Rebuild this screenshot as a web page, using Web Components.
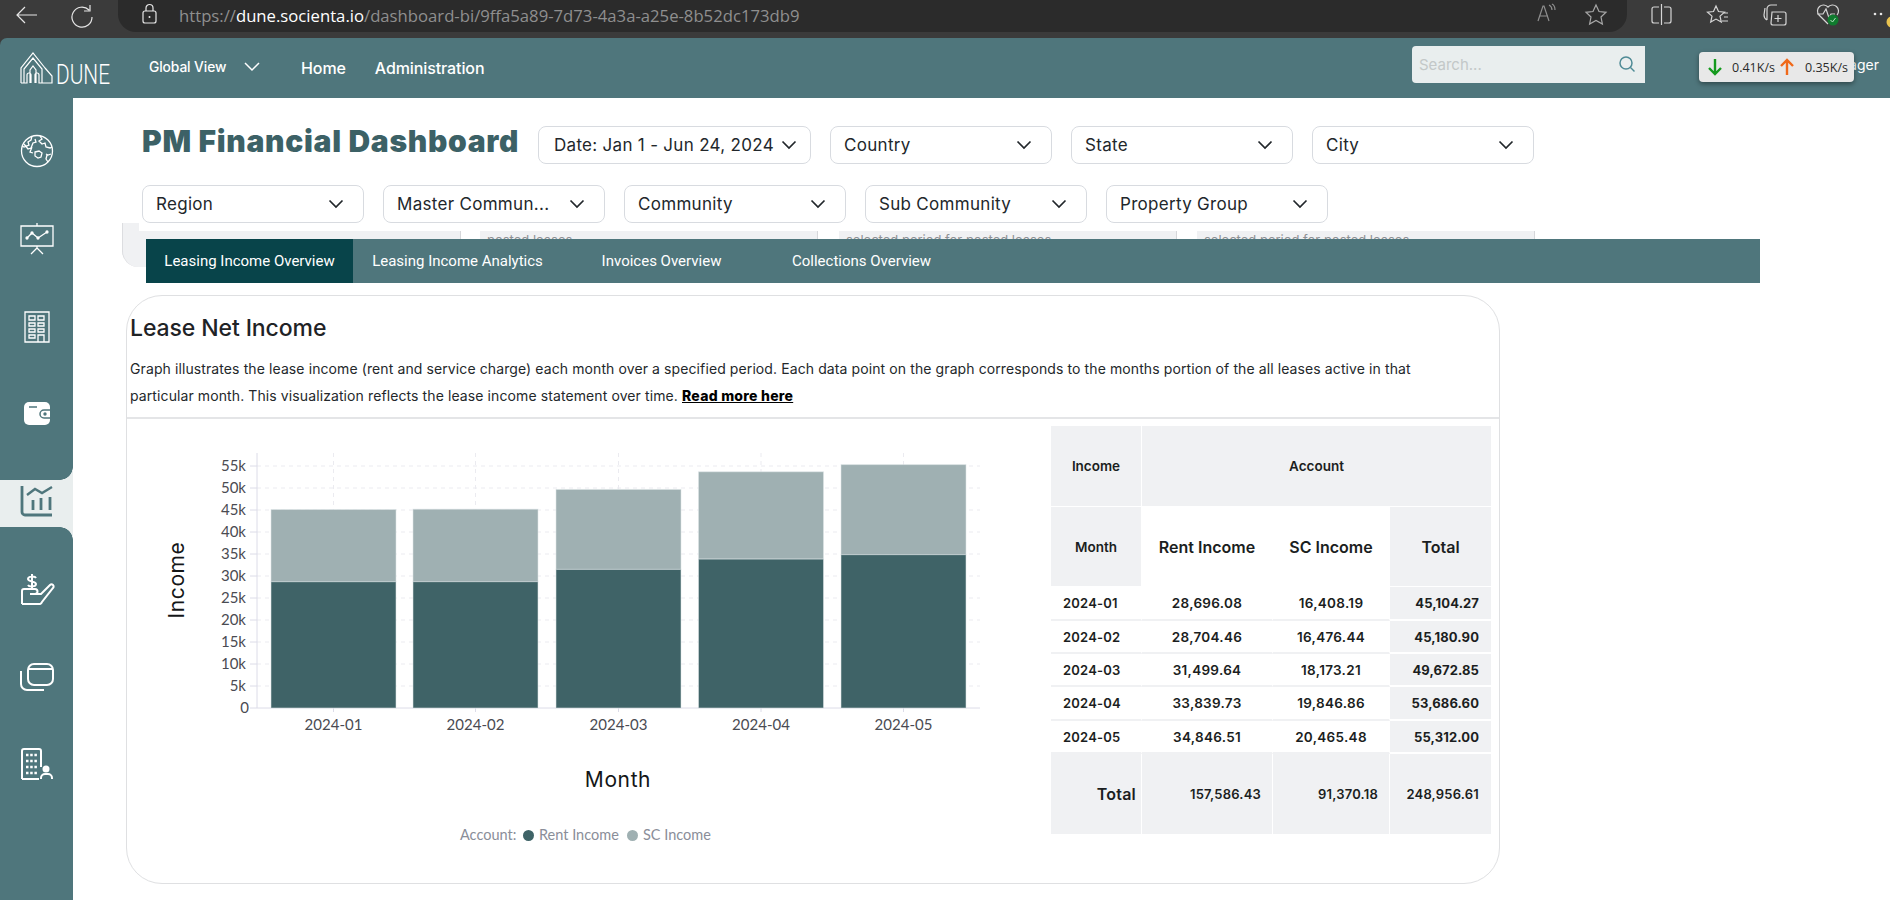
<!DOCTYPE html>
<html lang="en">
<head>
<meta charset="utf-8">
<title>PM Financial Dashboard</title>
<style>
  html, body { margin: 0; height: 100%; overflow: hidden; background: #3b3b3b; }
  body { font-family: Inter, "Noto Sans", sans-serif; color: #1f2326; }
  app-shell { height: 900px; }
</style>
</head>
<body>
<app-shell>
  <browser-bar slot="browser"></browser-bar>
  <app-header slot="header"></app-header>
  <side-nav slot="nav"></side-nav>
  <filter-bar></filter-bar>
  <hidden-cards></hidden-cards>
  <tab-bar></tab-bar>
  <lease-card>
    <income-chart slot="chart"></income-chart>
    <income-table slot="table"></income-table>
  </lease-card>
</app-shell>

<script>
const TEAL = '#4f767c';

class AppShell extends HTMLElement {
  constructor() {
    super();
    this.attachShadow({ mode: 'open' }).innerHTML = `
      <style>
        :host { display: flex; flex-direction: column; width: 1890px; height: 900px; overflow: hidden; }
        .frame { flex: 1; display: flex; flex-direction: column; background: ${TEAL}; border-top-left-radius: 7px; overflow: hidden; }
        .body { flex: 1; display: flex; min-height: 0; }
        main { flex: 1; background: #fff; min-width: 0; }
      </style>
      <slot name="browser"></slot>
      <div class="frame">
        <slot name="header"></slot>
        <div class="body">
          <slot name="nav"></slot>
          <main><slot></slot></main>
        </div>
      </div>`;
  }
}

class BrowserBar extends HTMLElement {
  constructor() {
    super();
    this.attachShadow({ mode: 'open' }).innerHTML = `
      <style>
        :host { display: flex; height: 38px; background: #3b3b3b; position: relative; }
        svg { position: absolute; left: 0; top: 0; fill: none; stroke: #d6d6d6; stroke-width: 1.2; }
        .pill { position: absolute; left: 118px; top: 0; width: 1509px; height: 32px; background: #2b2b2b; border-radius: 0 0 18px 18px; display: flex; align-items: center; padding: 0 0 2px 61px; box-sizing: border-box;
          font: 400 16.7px "Open Sans", sans-serif; color: #8f8f8f; white-space: nowrap; }
        b { font-weight: 400; color: #fff; }
      </style>
      <div class="pill"><span>https://<b>dune.socienta.io</b>/dashboard-bi/9ffa5a89-7d73-4a3a-a25e-8b52dc173db9</span></div>
      <svg width="1890" height="38" viewBox="0 0 1890 38">
        <path d="M37 15H17M25 7l-8 8 8 8" stroke="#e6e6e6"/>
        <path d="M89 10a10 10 0 1 0 3 7M90 5v6h-6" stroke="#e6e6e6"/>
        <rect x="143" y="11" width="13" height="12" rx="2" stroke="#e6e6e6"/><path d="M146 11V8a3.500 3.500 0 0 1 7 0v3" stroke="#e6e6e6"/><circle cx="149.500" cy="17" r="1" fill="#e6e6e6" stroke="none"/>
        <path d="M1538 21l5-15h1l5 15M1540 16h8M1549 5c2 1 3 3 3 5M1552 4c2 1 3 3 3 6" stroke="#8f8f8f"/>
        <path d="M1596 5l3 6.500 7 .8-5 4.700 1.400 7-6.400-3.500-6.400 3.500 1.400-7-5-4.700 7-.8z" stroke="#a8a8a8"/>
        <path d="M1659 7h-5a2 2 0 0 0-2 2v12a2 2 0 0 0 2 2h5M1664 7h5a2 2 0 0 1 2 2v12a2 2 0 0 1-2 2h-5M1661.500 4v21"/>
        <path d="M1716 6l2.500 5.500 6 .6-4.500 4 1.300 6-5.300-3-5.300 3 1.300-6-4.500-4 6-.6zM1723 13h5M1724 17h4M1722 21h6"/>
        <path d="M1767 20V9a4 4 0 0 1 4-4h6M1767 20c-2-1-3-3-3-5l1-7M1772 12h12a2 2 0 0 1 2 2v9a2 2 0 0 1-2 2h-11a2 2 0 0 1-2-2z M1778 15v7M1774.500 18.500h7"/>
        <path d="M1828 24l-9-9a6 6 0 0 1 9-8 6 6 0 0 1 9 8M1817 14h6l3-5 3 9 2-4h4"/>
        <circle cx="1833" cy="20" r="5.500" fill="#0f7b2e" stroke="none"/>
        <path d="M1830.500 20l2 2 3-4" stroke="#b9e0c4" stroke-width="1"/>
        <circle cx="1875" cy="14" r="1.300" fill="#e6e6e6" stroke="none"/><circle cx="1881" cy="14" r="1.300" fill="#e6e6e6" stroke="none"/>
        <circle cx="1892" cy="22" r="5.500" fill="#e9c34f" stroke="none"/>
      </svg>`;
  }
}

class AppHeader extends HTMLElement {
  constructor() {
    super();
    this.attachShadow({ mode: 'open' }).innerHTML = `
      <style>
        :host { display: flex; height: 60px; align-items: center; color: #fff; position: relative; flex: none; font-family: Inter, sans-serif; }
        .logo { margin-left: 20px; width: 112px; height: 46px; flex: none; }
        .logo path { fill: none; stroke: #fff; stroke-width: 1.200; }
        .logo text { font: 300 27px Roboto, sans-serif; fill: #fff; }
        .view { margin-left: 17px; font-size: 13.800px; display: flex; align-items: center; gap: 18px; width: 148px; flex: none; margin-top: -3px; font-weight: 500; letter-spacing: -.1px; white-space: nowrap; }
        .view svg { fill: none; stroke: #fff; stroke-width: 1.500; }
        a { font-size: 16px; font-weight: 500; margin-right: 29px; letter-spacing: -.1px; }
        a:first-of-type { margin-left: 4px; }
        .search { margin-left: auto; width: 233px; height: 37px; background: #e9eeee; border-radius: 4px 0 0 4px; display: flex; align-items: center; justify-content: space-between; padding: 0 9px 1px 7px; box-sizing: border-box; font-size: 15px; color: #c3c8c8; margin-top: -7px; }
        .search svg { fill: none; stroke: #4f8b96; stroke-width: 1.500; }
        .user { width: 36px; margin-left: 198px; margin-right: 11px; text-align: right; font-size: 14px; margin-top: -8px; flex: none; }
        .speed { position: absolute; left: 1699px; top: 14px; width: 155px; height: 30px; background: #e8e8e8; border-radius: 4px; box-shadow: 0 2px 5px rgba(0,0,0,.4); display: flex; align-items: center; color: #2b2b2b; font: 400 12.500px "Open Sans", sans-serif; box-sizing: border-box; padding-left: 8px; }
        .speed svg { fill: none; stroke-width: 2.400; flex: none; }
      </style>
      <svg class="logo" viewBox="20 45 112 46">
        <path d="M21 83V68l12-15 12 15M24 83V69l9-11 9 11v14M21 83h6v-8a2 2 0 0 1 4 0v8M35 83v-8a2 2 0 0 1 4 0v8h6M30 83V70l3-4 3 4v13M45 68l7 8v7h-7"/>
        <text x="56" y="83.500" textLength="54" lengthAdjust="spacingAndGlyphs">DUNE</text>
      </svg>
      <div class="view"><span>Global View</span><svg width="16" height="10" viewBox="0 0 16 10"><path d="M1 1l7 7 7-7"/></svg></div>
      <a>Home</a><a>Administration</a>
      <div class="search"><span>Search...</span><svg width="18" height="18" viewBox="0 0 18 18"><circle cx="8" cy="8" r="6"/><path d="M12.500 12.500l4 4"/></svg></div>
      <div class="user">ager</div>
      <div class="speed">
        <svg width="16" height="20" viewBox="0 0 16 20" stroke="#159a1e"><path d="M8 2v15M2 11l6 6 6-6"/></svg>
        <span style="margin-left:9px;width:47px">0.41K/s</span>
        <svg width="16" height="20" viewBox="0 0 16 20" stroke="#f0691a"><path d="M8 18V3M2 9l6-6 6 6"/></svg>
        <span style="margin-left:10px">0.35K/s</span>
      </div>`;
  }
}

const NAV_ICONS = {
  globe: `<circle cx="18" cy="18" r="15.500"/><path d="M21 3l2 3-3 2 3 3 3-1 1 4 4 1 2-1M13 3l-1 4-3 2 1 3-5 2-2-1M5 11l4 5 3-1 2-5 3-1-1-3M13 14l-2 5 3 1M16 19l4-1 3 2-1 4-3 1-3-2zM27 21l2 1 3-1M28 22l-1 4 2 3"/>`,
  board: `<path d="M2 6h32v20H2zM18 6V3M18 26v2M18 28l-6 6M18 28l6 6M8 18l5-5 6 5 9-6"/><circle cx="8" cy="18" r="1" fill="#fff"/><circle cx="13" cy="13" r="1" fill="#fff"/><circle cx="19" cy="18" r="1" fill="#fff"/><circle cx="28" cy="12" r="1" fill="#fff"/>`,
  building: `<path d="M6 3h24v30H6zM10 7h6v4h-6zM19 7h6v4h-6zM10 14h6v3h-6zM19 14h6v3h-6zM10 20h6v3h-6zM19 20h6v3h-6zM10 26h6v3h-6zM19 26h6v7h-6z"/>`,
  wallet: `<path d="M10 7h16a5 5 0 0 1 5 5v13a5 5 0 0 1-5 5H10a5 5 0 0 1-5-5V12a5 5 0 0 1 5-5z" fill="#fff" stroke="none"/><path d="M31 15h-6a4 4 0 0 0 0 8h6" stroke="${TEAL}" stroke-width="1.500"/><path d="M10 12h8" stroke="${TEAL}" stroke-width="1.500"/><circle cx="26" cy="19" r="1.700" fill="${TEAL}" stroke="none"/>`,
  chart: `<path d="M3 1v26a3 3 0 0 0 3 3h27" stroke="${TEAL}" stroke-width="2.800"/><path d="M14 25V15M22 25V13M31 25V12" stroke="${TEAL}" stroke-width="2.800"/><path d="M8 10l8-6 7 4 10-6" stroke="${TEAL}" stroke-width="2.400"/>`,
  hand: `<path d="M17 7c-1-2-8-2-8 1s8 2 8 5-7 3-8 1M13 3v15" stroke-width="2"/><path d="M3 33V20a2 2 0 0 1 2-2h11a2.500 2.500 0 0 1 0 5h-5M16 23h6l9-9a2 2 0 0 1 3 3L23 31a3 3 0 0 1-2 2H3" stroke-width="2"/>`,
  cards: `<rect x="9" y="4" width="25" height="21" rx="6" stroke-width="2"/><path d="M9 9h25" stroke-width="2"/><path d="M2 11v13a6 6 0 0 0 6 6h17" stroke-width="2"/>`,
  tenant: `<path d="M3 33V5a2 2 0 0 1 2-2h15a2 2 0 0 1 2 2v16M3 33h17" stroke-width="2"/><path d="M7 9h11M7 15h11M7 21h11M7 27h11" stroke-width="2.400" stroke-dasharray="2.500 1.700"/><circle cx="27" cy="23" r="3.500" fill="#fff" stroke="none"/><path d="M22 33v-1a4 4 0 0 1 4-4h3a4 4 0 0 1 4 4v1" stroke-width="2"/>`
};

class SideNav extends HTMLElement {
  constructor() {
    super();
    const items = [
      ['globe', 29.5], ['board', 40], ['building', 42], ['wallet', 39],
      ['chart', 43, true], ['hand', 38.5], ['cards', 42], ['tenant', 39]
    ];
    this.attachShadow({ mode: 'open' }).innerHTML = `
      <style>
        :host { display: block; width: 73px; flex: none; background: ${TEAL}; }
        div { height: 47px; display: flex; align-items: center; justify-content: center; position: relative; }
        svg { fill: none; stroke: #fff; stroke-width: 1.300; }
        .on { background: #e9eeee; }
        .on::before, .on::after { content: ""; position: absolute; right: 0; width: 13px; height: 13px; }
        .on::before { top: -13px; background: radial-gradient(circle at 0 0, ${TEAL} 12.500px, #e9eeee 13px); }
        .on::after { bottom: -13px; background: radial-gradient(circle at 0 100%, ${TEAL} 12.500px, #e9eeee 13px); }
      </style>
      ${items.map(([name, top, on]) => `<div class="${on ? 'on' : ''}" style="margin-top:${top}px"><svg width="36" height="36" viewBox="0 0 36 36">${NAV_ICONS[name]}</svg></div>`).join('')}`;
  }
}

class FilterSelect extends HTMLElement {
  constructor() {
    super();
    this.attachShadow({ mode: 'open' }).innerHTML = `
      <style>
        :host { display: flex; align-items: center; justify-content: space-between; width: var(--w, 222px); height: 38px; box-sizing: border-box; border: 1px solid #d8dbe0; border-radius: 8px; padding: 0 var(--pr, 19px) 1px var(--pl, 13px); font: 400 17px Inter, sans-serif; letter-spacing: .3px; color: #22272b; white-space: nowrap; flex: none; }
        svg { fill: none; stroke: #22272b; stroke-width: 1.700; flex: none; }
      </style>
      <span><slot></slot></span>
      <svg width="16" height="10" viewBox="0 0 16 10"><path d="M1.500 1.500L8 8l6.500-6.500"/></svg>`;
  }
}

class FilterBar extends HTMLElement {
  constructor() {
    super();
    this.attachShadow({ mode: 'open' }).innerHTML = `
      <style>
        :host { display: flex; flex-direction: column; gap: 21px; padding: 28px 0 0 69px; }
        .row { display: flex; gap: 19px; align-items: center; }
        h1 { margin: -9px 0 0; width: 377px; font: 900 30px Inter, sans-serif; color: #3c6166; white-space: nowrap; letter-spacing: .7px; }
        .date { --w: 273px; --pl: 15px; --pr: 13px; }
      </style>
      <div class="row">
        <h1>PM Financial Dashboard</h1>
        <filter-select class="date">Date: Jan 1 - Jun 24, 2024</filter-select>
        <filter-select>Country</filter-select>
        <filter-select>State</filter-select>
        <filter-select>City</filter-select>
      </div>
      <div class="row">
        <filter-select>Region</filter-select>
        <filter-select>Master Commun...</filter-select>
        <filter-select>Community</filter-select>
        <filter-select>Sub Community</filter-select>
        <filter-select>Property Group</filter-select>
      </div>`;
  }
}

class HiddenCards extends HTMLElement {
  constructor() {
    super();
    const cards = [[322, 0, ''], [338, 19, 'posted leases'], [338, 21, 'selected period for posted leases'], [338, 20, 'selected period for posted leases']];
    this.attachShadow({ mode: 'open' }).innerHTML = `
      <style>
        :host { display: block; margin-left: 49px; width: 1413px; height: 44px; background: #f0f1f3; border-radius: 0 0 0 16px; border-left: 1px solid #dcdde0; box-sizing: border-box; overflow: hidden; }
        .inner { margin-left: 16px; height: 16px; background: #fff; display: flex; overflow: hidden; }
        .c { margin-top: 8px; height: 40px; background: #f0f1f3; border-right: 1px solid #d6d7da; box-sizing: border-box; flex: none; font: 400 13px/16px Inter, sans-serif; color: #8d9094; padding: 1px 0 0 7px; white-space: nowrap; }
      </style>
      <div class="inner">${cards.map(([w, m, t]) => `<div class="c" style="width:${w}px;margin-left:${m}px">${t}</div>`).join('')}</div>`;
  }
}

class TabBar extends HTMLElement {
  constructor() {
    super();
    this.attachShadow({ mode: 'open' }).innerHTML = `
      <style>
        :host { display: flex; position: relative; margin: -28px 0 0 73px; width: 1614px; height: 44px; background: ${TEAL}; color: #fff; font: 400 15px Roboto, sans-serif; }
        div { display: flex; align-items: center; justify-content: center; white-space: nowrap; flex: none; }
        .on { background: #08444a; width: 207px; }
        .second { margin-left: 19px; width: 171px; }
        .third { margin-left: 59px; width: 119px; }
        .fourth { margin-left: 71px; width: 139px; }
      </style>
      <div class="on">Leasing Income Overview</div>
      <div class="second">Leasing Income Analytics</div>
      <div class="third">Invoices Overview</div>
      <div class="fourth">Collections Overview</div>`;
  }
}

class LeaseCard extends HTMLElement {
  constructor() {
    super();
    this.attachShadow({ mode: 'open' }).innerHTML = `
      <style>
        :host { display: flex; flex-direction: column; margin: 12px 0 0 53px; width: 1374px; height: 589px; box-sizing: border-box; border: 1.500px solid #dfe0e2; border-radius: 36px; overflow: hidden; font-family: Inter, sans-serif; background: #fff; }
        header { height: 123px; box-sizing: border-box; padding: 17px 0 0 3px; border-bottom: 2px solid #e4e5e7; flex: none; }
        h2 { margin: 0; font: 500 23px/30px Inter, sans-serif; color: #1f2326; letter-spacing: -.1px; }
        p { margin: 12px 0 0; font-size: 14px; line-height: 27px; color: #24282b; letter-spacing: .1px; white-space: nowrap; }
        a { font-weight: 800; color: #000; text-decoration: underline; letter-spacing: .25px; }
        .body { flex: 1; display: flex; min-height: 0; }
      </style>
      <header>
        <h2>Lease Net Income</h2>
        <p>Graph illustrates the lease income (rent and service charge) each month over a specified period. Each data point on the graph corresponds to the months portion of the all leases active in that<br>particular month. This visualization reflects the lease income statement over time. <a>Read more here</a></p>
      </header>
      <div class="body"><slot name="chart"></slot><slot name="table"></slot></div>`;
  }
}

class IncomeChart extends HTMLElement {
  constructor() {
    super();
    const rows = [
      ['2024-01', 28696.08, 16408.19, 333.5], ['2024-02', 28704.46, 16476.44, 475.5], ['2024-03', 31499.64, 18173.21, 618.5],
      ['2024-04', 33839.73, 19846.86, 761], ['2024-05', 34846.51, 20465.48, 903.5]
    ];
    const y = v => 708 - v * 0.0044;
    let ticks = '';
    for (let k = 0; k <= 55; k += 5) {
      const ty = y(k * 1000);
      if (k) ticks += `<path class="grid" d="M257 ${ty}H980"/>`;
      ticks += `<path class="axis" d="M250 ${ty}h7"/><text class="tick" x="${k ? 246 : 249}" y="${ty + 5}" text-anchor="end">${k ? k + 'k' : 0}</text>`;
    }
    const bars = rows.map(([m, rent, sc, cx]) => `
      <path class="grid" d="M${cx} 453V708"/>
      <rect class="bar" x="${cx - 62.5}" y="${y(rent + sc)}" width="125" height="${sc * 0.0044}" fill="#9fb0b2"/>
      <rect class="bar" x="${cx - 62.5}" y="${y(rent)}" width="125" height="${rent * 0.0044}" fill="#3f6367"/>
      <path class="axis" d="M${cx} 708v4"/>
      <text class="tick" x="${cx}" y="730" text-anchor="middle">${m}</text>`).join('');
    this.attachShadow({ mode: 'open' }).innerHTML = `
      <style>
        :host { display: block; width: 924px; height: 100%; flex: none; }
        svg { display: block; }
        .grid { stroke: #ebebf0; stroke-dasharray: 4 4; fill: none; }
        .axis { stroke: #dcdce8; fill: none; }
        .bar { stroke: #dfe6e7; stroke-width: 1; stroke-opacity: .55; }
        .tick { font: 400 15px Lato, sans-serif; fill: #4a4b52; }
        .title { font: 400 21px Inter, sans-serif; fill: #141618; letter-spacing: .6px; }
        .legend { font: 400 14.500px Lato, sans-serif; fill: #8a8e99; }
      </style>
      <svg width="924" height="464" viewBox="127 419 924 464">
        ${ticks}
        <path class="axis" d="M257 453V708H980"/>
        ${bars}
        <text class="title" x="618" y="787" text-anchor="middle">Month</text>
        <text class="title" transform="translate(184 580) rotate(-90)" text-anchor="middle">Income</text>
        <text class="legend" x="460" y="840">Account:</text>
        <circle cx="528.500" cy="835.500" r="5.500" fill="#3f6367"/>
        <text class="legend" x="539" y="840">Rent Income</text>
        <circle cx="632.500" cy="835.500" r="5.500" fill="#9fb0b2"/>
        <text class="legend" x="643" y="840">SC Income</text>
      </svg>`;
  }
}

class IncomeTable extends HTMLElement {
  constructor() {
    super();
    const rows = [
      ['2024-01', '28,696.08', '16,408.19', '45,104.27', 34], ['2024-02', '28,704.46', '16,476.44', '45,180.90', 33],
      ['2024-03', '31,499.64', '18,173.21', '49,672.85', 33], ['2024-04', '33,839.73', '19,846.86', '53,686.60', 34],
      ['2024-05', '34,846.51', '20,465.48', '55,312.00', 33]
    ];
    this.attachShadow({ mode: 'open' }).innerHTML = `
      <style>
        :host { display: block; padding-top: 7px; font-family: Inter, sans-serif; }
        table { border-collapse: separate; border-spacing: 0; table-layout: fixed; width: 441px; color: #1b1e21; font-weight: 600; }
        td, th { padding: 0; box-sizing: border-box; border-right: 1px solid #fff; border-bottom: 1px solid #fff; font-weight: 600; }
        .g { background: #f0f1f3; }
        .h1 { font-size: 13.500px; text-align: center; }
        .h2 { font-size: 16px; text-align: center; }
        .d td { font-size: 13.500px; letter-spacing: .3px; text-align: center; border-bottom: 2px solid #f0f1f3; }
        .d td:first-child { font-size: 13px; letter-spacing: .2px; text-align: left; padding-left: 12px; }
        .d td:last-child { font-size: 13px; letter-spacing: .1px; text-align: right; padding-right: 12px; font-weight: 700; border-bottom-color: #fff; }
        .t td { font-size: 13px; letter-spacing: .2px; text-align: right; padding-right: 11px; }
        .t td:first-child { font-size: 16px; padding-right: 5px; }
        .t td:last-child { padding-right: 12px; }
      </style>
      <table>
        <colgroup><col style="width:91px"><col style="width:131px"><col style="width:117px"><col style="width:102px"></colgroup>
        <tr style="height:81px"><th class="g h1">Income</th><th class="g h1" colspan="3">Account</th></tr>
        <tr style="height:80px"><th class="g h1">Month</th><th class="h2">Rent Income</th><th class="h2">SC Income</th><th class="g h2">Total</th></tr>
        ${rows.map(r => `<tr class="d" style="height:${r[4]}px"><td>${r[0]}</td><td>${r[1]}</td><td>${r[2]}</td><td class="g">${r[3]}</td></tr>`).join('')}
        <tr class="t" style="height:81px"><td class="g">Total</td><td class="g">157,586.43</td><td class="g">91,370.18</td><td class="g">248,956.61</td></tr>
      </table>`;
  }
}

customElements.define('app-shell', AppShell);
customElements.define('browser-bar', BrowserBar);
customElements.define('app-header', AppHeader);
customElements.define('side-nav', SideNav);
customElements.define('filter-select', FilterSelect);
customElements.define('filter-bar', FilterBar);
customElements.define('hidden-cards', HiddenCards);
customElements.define('tab-bar', TabBar);
customElements.define('lease-card', LeaseCard);
customElements.define('income-chart', IncomeChart);
customElements.define('income-table', IncomeTable);
</script>
</body>
</html>
